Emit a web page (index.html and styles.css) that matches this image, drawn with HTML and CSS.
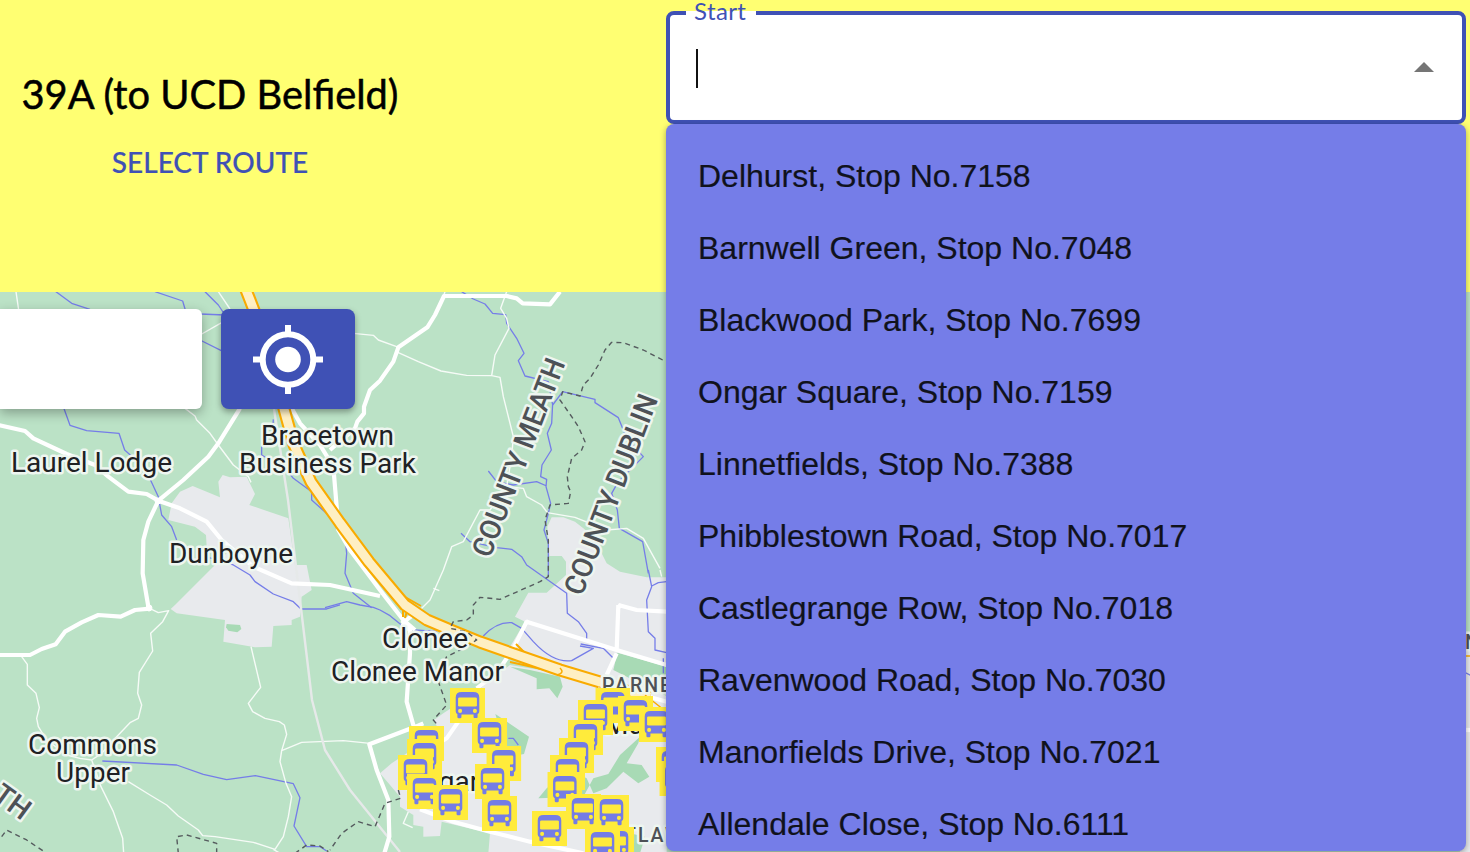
FILE: index.html
```
<!DOCTYPE html>
<html lang="en">
<head>
<meta charset="utf-8">
<title>Route planner</title>
<link rel="stylesheet" href="styles.css">
</head>
<body>
<div class="app">
  <header class="banner">
    <div class="route">
      <h1 class="route-name">39A (to UCD Belfield)</h1>
      <button class="route-button">SELECT ROUTE</button>
    </div>
    <div class="picker">
      <div class="field">
        <span class="field-label">Start</span>
        <span class="caret"></span>
        <svg class="arrow" width="20" height="10" viewBox="0 0 20 10"><path d="M0 10 10 0l10 10z"/></svg>
      </div>
      <ul class="options">
        <li>Delhurst, Stop No.7158</li>
        <li>Barnwell Green, Stop No.7048</li>
        <li>Blackwood Park, Stop No.7699</li>
        <li>Ongar Square, Stop No.7159</li>
        <li>Linnetfields, Stop No.7388</li>
        <li>Phibblestown Road, Stop No.7017</li>
        <li>Castlegrange Row, Stop No.7018</li>
        <li>Ravenwood Road, Stop No.7030</li>
        <li>Manorfields Drive, Stop No.7021</li>
        <li>Allendale Close, Stop No.6111</li>
      </ul>
    </div>
  </header>
  <main class="map">
    <svg class="map-canvas" width="1470" height="560" viewBox="0 292 1470 560">
      <defs>
        <symbol id="bus" viewBox="0 0 104 104">
          <path class="bus-bg" d="M0 0h104v104H0z"/>
          <path class="bus-body" d="M17 28Q17 12 35 12H69Q87 12 87 28V70Q87 75 82 78V86Q82 90 78 90H74Q70 90 70 86V79H34V86Q34 90 30 90H26Q22 90 22 86V78Q17 75 17 70Z"/>
          <rect class="bus-bg" x="24" y="28" width="56" height="27" rx="4"/>
          <circle class="bus-bg" cx="30" cy="68" r="6"/><circle class="bus-bg" cx="74" cy="68" r="6"/>
        </symbol>
      </defs>
      <g class="town">
        <path transform="translate(0 290) scale(.33333)" d="M505 690 515 640 540 605 578 588 660 622 655 575 668 555 690 562 740 560 765 612 748 645 865 685 885 825 920 825 935 900 905 920 900 980 875 990 875 1005 820 1008 815 1070 765 1072 670 1055 675 990 530 970 512 957 525 945 630 840 680 790 620 770 618 735 585 710Z"/>
        <path transform="translate(460 500) scale(.33333)" d="M262 80 275 52 310 52 345 65 370 85 400 110 440 190 480 215 560 232H630V600L430 545 150 440 195 365 165 350 205 278H260L318 225V185L305 168H268Z"/>
        <path transform="translate(330 570) scale(.33333)" d="M540 285 480 330 440 365 340 430 312 450 330 490 245 540 185 580 150 610 210 680 210 710 250 735 250 765 280 770 280 800 330 798 335 755 480 790 475 850 1010 850 1010 360 800 320 690 310Z"/>
        <path d="M1460 632h10v220h-10z"/>
      </g>
      <g class="park" transform="translate(330 570) scale(.33333)">
        <path d="M540 290 620 325 620 358 658 355 682 385 698 350 690 320 600 300ZM496 432 597 500 582 552 540 560 510 480ZM862 248 1010 290V378L950 350 850 300ZM930 500 870 555 835 612 790 625 760 680 625 685 650 655 720 600 770 625 790 670 830 655 880 605 925 640 958 620 935 585 890 580 925 520ZM900 790 945 800 930 850 890 850Z"/>
        <path d="M-310 165-270 168-266 180-278 190-305 185-312 175Z" transform="translate(0 -3)"/>
      </g>
      <g class="water">
        <path transform="translate(0 290) scale(.33333)" d="M165 3 215 40 270 58M465 5 548 33 556 60M615 5 655 45 675 75 600 72M600 150 670 185M190 350 210 406 260 422 357 430 374 480 435 535 475 620 485 675 515 710 530 750M600 795 700 825 750 855 765 875 820 912 880 935 903 957H980L1020 945"/>
        <path transform="translate(0 290) scale(.33333)" d="M820 388 817 430 785 470V495L860 540 880 565 935 605V630L985 675 1030 740"/>
        <path transform="translate(330 290) scale(.33333)" d="M395 5 430 27 465 42 488 70 527 74 530 100 560 145 582 190 565 212 585 258 655 275 668 345 698 305 795 328 795 338 865 383 890 445 940 500 865 575 845 610 862 660 868 715 938 755 955 850M668 340 665 400 652 430 664 480 636 525 632 560 650 568 648 590 662 640 655 670 642 720 655 760V860M475 543 500 575 550 585 620 575 650 588M393 730 420 755 500 773 545 778 575 800 590 825 710 910 712 970 745 995 770 1030V1050M45 740 50 790 45 850 70 910 125 953"/>
        <path transform="translate(0 570) scale(.33333)" d="M307 573 530 585 610 613 680 629 766 617 880 641 900 683 882 768 920 830H960L980 843"/>
        <path transform="translate(330 570) scale(.33333)" d="M-15 113 50 95 90 105 130 112 150 120 180 137 230 178 320 184M460 198Q500 155 545 158L575 175 610 215Q670 280 725 272L790 235 750 228M752 222 820 235 850 265M955 0 965 50 950 90 955 185 975 205 975 240 1010 248M1010 35 985 38 965 48M1000 265V310M535 505 550 505 565 525"/>
        <path d="m1464 672 8 4"/>
      </g>
      <g class="minor">
        <path transform="translate(0 290) scale(.33333)" d="M48 5 56 60M655 5 690 57M600 135 665 98M555 355 585 378 590 390 630 430 655 465 700 525 745 560 753 577"/>
        <path transform="translate(330 290) scale(.33333)" d="M70 130 130 136 145 150 200 170 205 188 265 215 333 243 410 256 485 257 510 262 520 320 550 440 545 500 530 590 580 595 590 620 635 645 652 668 735 682 830 720 890 715 940 745 990 835M485 257 495 195 537 115 530 85 512 55 530 5M345 5 340 20M530 590 480 660 450 660 400 755 365 770 340 840 300 930 270 960M310 895 328 902"/>
        <path transform="translate(0 570) scale(.33333)" d="M65 260 82 283V345L108 370 118 413 110 445 115 470 140 510 200 555 240 565 275 570 305 550 350 500 390 458 415 445 425 405 413 370 418 307 458 243 452 190 488 155 506 122 475 128 455 118M753 230 782 352 745 400 758 425 795 445 838 455 853 465 860 493 845 542 840 575 858 640 875 680 865 740 850 800 825 838 760 817 645 800 608 797 595 780 535 738 500 705 450 675 385 635M845 542 905 517 1030 512 1110 520M275 570 303 650 340 725 368 805 371 850M820 838 840 850"/>
        <path transform="translate(330 570) scale(.33333)" d="M235 725 220 760 248 773M990 0 995 20"/>
      </g>
      <path class="rail" d="M274 409 288 500 300 600 312 700 325 750 350 790 400 852"/>
      <g class="major">
        <path transform="translate(0 290) scale(.33333)" d="M-5 405 75 423 100 445 200 492 285 525 325 560 385 605 440 612 475 632 445 695 430 750 428 850 445 950M475 632 550 570 625 500 655 460 720 355M475 632 540 655 620 695 665 750 760 830 875 880 990 885 1140 918M875 355 900 400 960 465 1000 530 1010 650 1015 720 1050 780 1095 840 1140 900 1210 990 1245 1020"/>
        <path transform="translate(330 290) scale(.33333)" d="M690 5 660 43 578 40 560 25 530 18H342L315 75 292 112 205 172 190 215 150 272 120 300 102 350V370L82 395 75 415 0 480M30 430-10 465"/>
        <path transform="translate(0 570) scale(.33333)" d="M0 255H90L125 237 167 223 195 185 245 157 295 135 362 140 405 120 450 116"/>
        <path transform="translate(330 570) scale(.33333)" d="M215 160 240 180 240 250 230 395 252 472 118 523 140 600 175 690 178 800 163 850M252 472 280 460M590 155 550 235 500 310 440 355M590 155 700 190 860 240 1010 285M860 250 830 315M865 105 860 240M865 105 920 120 1010 125M680 310 830 345 1010 395M385 455 350 505 310 530M270 718 370 755 480 785 600 815 760 850M215 160 245 138"/>
        <path d="M1460 730h10"/>
        <circle cx="149" cy="608" r="3"/><circle cx="158" cy="501" r="3"/><circle cx="527" cy="622" r="2"/><circle cx="620" cy="606" r="2"/>
      </g>
      <g class="motorway-edge">
        <path class="motorway-casing" d="M244 285 250 300 270 352 284 409 294 445 311 482 340 523 369 562 405 605 427 620 453 631 480 642 560 670 600 682"/>
        <path d="M403 605V617M407 611 405 618M405 597 421 606M516 644 525 653M510 662 560 673"/>
        <path class="motorway-narrow" d="M600 682 650 697"/>
      </g>
      <path class="motorway" d="M244 285 250 300 270 352 284 409 294 445 311 482 340 523 369 562 405 605 427 620 453 631 480 642 560 670 600 682 650 697"/>
      <path class="ramp" d="M1464 656h8M560 668q5 5-3 7M645 695 664 710"/>
      <g class="border">
        <path transform="translate(330 290) scale(.33333)" d="M998 210 940 180 880 158 845 157 825 180 805 225 780 265 760 285 750 318 698 305 690 330 725 380 745 410 765 455 755 480 725 505 712 560 715 590 722 605 715 640 660 645 645 690 655 750V860L630 875 510 928 450 922 430 945V975L410 990 370 995 360 1015 410 1025 440 1050 400 1075 350 1100 320 1160 350 1245 310 1290 335 1320"/>
        <path transform="translate(330 570) scale(.33333)" d="M205 660 212 685 165 700 135 770 85 755 35 790 0 840"/>
        <path transform="translate(0 570) scale(.33333)" d="M5 800 20 780 80 810 140 850M535 850 530 800 560 795 650 820 650 850M885 850 920 825 960 828 985 845"/>
      </g>
      <g class="labels">
        <text x="261" y="445" textLength="133">Bracetown</text>
        <text x="239" y="473" textLength="177">Business Park</text>
        <text x="11" y="472" textLength="161">Laurel Lodge</text>
        <text x="169" y="563" textLength="124">Dunboyne</text>
        <text x="382" y="648" textLength="86">Clonee</text>
        <text x="331" y="681" textLength="173">Clonee Manor</text>
        <text x="28" y="754" textLength="129">Commons</text>
        <text x="56" y="782" textLength="74">Upper</text>
        <text x="404" y="791">Ongar</text>
        <text x="604" y="734">Mulhud</text>
      </g>
      <g class="labels county">
        <text transform="translate(490 559) rotate(-68.9)" textLength="210" lengthAdjust="spacingAndGlyphs">COUNTY MEATH</text>
        <text transform="translate(582 597) rotate(-68.9)" textLength="212" lengthAdjust="spacingAndGlyphs">COUNTY DUBLIN</text>
        <text transform="translate(22 821) rotate(36)" text-anchor="end">TH</text>
      </g>
      <g class="labels district">
        <text x="602" y="692">PARNELL</text>
        <text x="624" y="842">TLAWN</text>
        <text x="1465" y="649">N</text>
      </g>
      <g transform="translate(330 570) scale(.33333)">
        <use href="#bus" x="360" y="354" width="105" height="105"/>
        <use href="#bus" x="796" y="354" width="105" height="105"/>
        <use href="#bus" x="864" y="378" width="105" height="105"/>
        <use href="#bus" x="744" y="390" width="105" height="105"/>
        <use href="#bus" x="927" y="411" width="105" height="105"/>
        <use href="#bus" x="426" y="444" width="105" height="105"/>
        <use href="#bus" x="714" y="450" width="105" height="105"/>
        <use href="#bus" x="237" y="468" width="105" height="105"/>
        <use href="#bus" x="687" y="504" width="105" height="105"/>
        <use href="#bus" x="231" y="507" width="105" height="105"/>
        <use href="#bus" x="469" y="528" width="105" height="105"/>
        <use href="#bus" x="978" y="531" width="105" height="105"/>
        <use href="#bus" x="204" y="555" width="105" height="105"/>
        <use href="#bus" x="660" y="555" width="105" height="105"/>
        <use href="#bus" x="988" y="573" width="105" height="105"/>
        <use href="#bus" x="435" y="582" width="105" height="105"/>
        <use href="#bus" x="652" y="606" width="105" height="105"/>
        <use href="#bus" x="231" y="612" width="105" height="105"/>
        <use href="#bus" x="309" y="645" width="105" height="105"/>
        <use href="#bus" x="708" y="672" width="105" height="105"/>
        <use href="#bus" x="792" y="675" width="105" height="105"/>
        <use href="#bus" x="456" y="678" width="105" height="105"/>
        <use href="#bus" x="606" y="723" width="105" height="105"/>
        <use href="#bus" x="807" y="771" width="105" height="105"/>
        <use href="#bus" x="765" y="774" width="105" height="105"/>
      </g>
    </svg>
    <div class="map-controls">
      <div class="search-box"></div>
      <button class="locate">
        <svg width="70" height="70" viewBox="0 0 70 70"><circle cx="35" cy="34.5" r="25.3" fill="none" stroke="#fff" stroke-width="6"/><circle cx="35" cy="34.5" r="12.8" fill="#fff"/><path d="M35 0v9M35 60v9M0 34.5h9M61 34.5h9" stroke="#fff" stroke-width="6"/></svg>
      </button>
    </div>
  </main>
</div>
</body>
</html>
```
FILE: styles.css
```
* { box-sizing: border-box; }
body { margin: 0; width: 1470px; height: 852px; overflow: hidden; }
button { border: 0; background: none; padding: 0; }
.app { height: 852px; display: flex; flex-direction: column; overflow: hidden; }
.banner { height: 292px; flex: none; display: flex; justify-content: space-between; background: #ffff72; font-family: Lato, sans-serif; }
.route { width: 420px; padding-top: 69px; display: flex; flex-direction: column; align-items: center; }
.route-name { margin: 0; font-size: 39.8px; line-height: 50px; font-weight: 400; -webkit-text-stroke: .5px #000; color: #000; white-space: nowrap; }
.route-button { margin-top: 26px; font: 500 28px/34px Lato, sans-serif; color: #3f51b5; -webkit-text-stroke: .2px #3f51b5; }
.picker { position: relative; z-index: 2; width: 800px; margin: 11px 4px 0 0; }
.field { height: 113px; border: 4px solid #3f51b5; border-radius: 8px; background: #fff; display: flex; align-items: center; justify-content: space-between; padding: 2px 28px 0 26px; position: relative; }
.field-label { position: absolute; left: 16px; top: -4px; height: 4px; width: 70px; padding-left: 8px; background: #fff; color: #3f51b5; font-size: 24px; line-height: 0; letter-spacing: .4px; }
.caret { width: 2px; height: 39px; background: #111; }
.arrow { fill: #757575; margin-top: -3px; }
.options { position: absolute; left: 0; top: 113px; width: 800px; height: 727px; margin: 0; padding: 16px 0 0; list-style: none; overflow: hidden; background: #757de8; border-radius: 8px; box-shadow: 0 2px 6px rgba(0,0,0,.35); }
.options li { height: 72px; padding: 0 32px; line-height: 72px; font-family: "Liberation Sans", Arial, sans-serif; font-size: 32px; color: #10121c; -webkit-text-stroke: .2px #10121c; white-space: nowrap; }
.map { height: 560px; flex: none; position: relative; background: #bbe2c6; }
.map-canvas { display: block; }
.map-controls { position: absolute; left: 0; top: 17px; display: flex; gap: 19px; }
.search-box { width: 202px; height: 100px; background: #fff; border-radius: 0 6px 6px 0; box-shadow: 0 4px 12px rgba(0,0,0,.3); }
.locate { width: 134px; height: 100px; padding-top: 1px; display: flex; align-items: center; justify-content: center; background: #3f51b5; border-radius: 8px; box-shadow: 0 3px 6px rgba(0,0,0,.35); }
.town { fill: #e8eaed; }
.park { fill: #a8dab5; }
.water, .minor, .major, .border, .rail, .motorway-edge, .motorway, .ramp { fill: none; stroke-linejoin: round; }
.water path { stroke: #757de8; stroke-width: 1.3px; vector-effect: non-scaling-stroke; }
.minor path { stroke: #f6fbf7; stroke-width: 1.4px; vector-effect: non-scaling-stroke; }
.major path { stroke: #fff; stroke-width: 4.2px; vector-effect: non-scaling-stroke; }
.major circle { fill: #fff; stroke: #fff; }
.rail { stroke: #e6e9e9; stroke-width: 2.4px; }
.border path { stroke: #555b5e; stroke-width: 1.4px; stroke-dasharray: 5 4; vector-effect: non-scaling-stroke; }
.motorway-edge { stroke: #f9ab00; stroke-width: 2px; }
.motorway-casing { stroke-width: 13px; }
.motorway-narrow { stroke-width: 11px; }
.motorway { stroke: #feefc3; stroke-width: 8.8px; }
.ramp { stroke: #f9ab00; stroke-width: 1.5px; }
.labels { font-family: Roboto, sans-serif; font-size: 28px; fill: #202124; stroke: #eef6f0; stroke-width: 5px; stroke-linejoin: round; paint-order: stroke; }
.county { font-weight: 500; font-size: 29px; fill: #4d5156; }
.district { font-weight: 500; font-size: 19.5px; letter-spacing: 2px; fill: #4d5156; }
.bus-bg { fill: #ffeb3b; stroke: none; }
.bus-body { fill: #747ce5; stroke: none; }
```
